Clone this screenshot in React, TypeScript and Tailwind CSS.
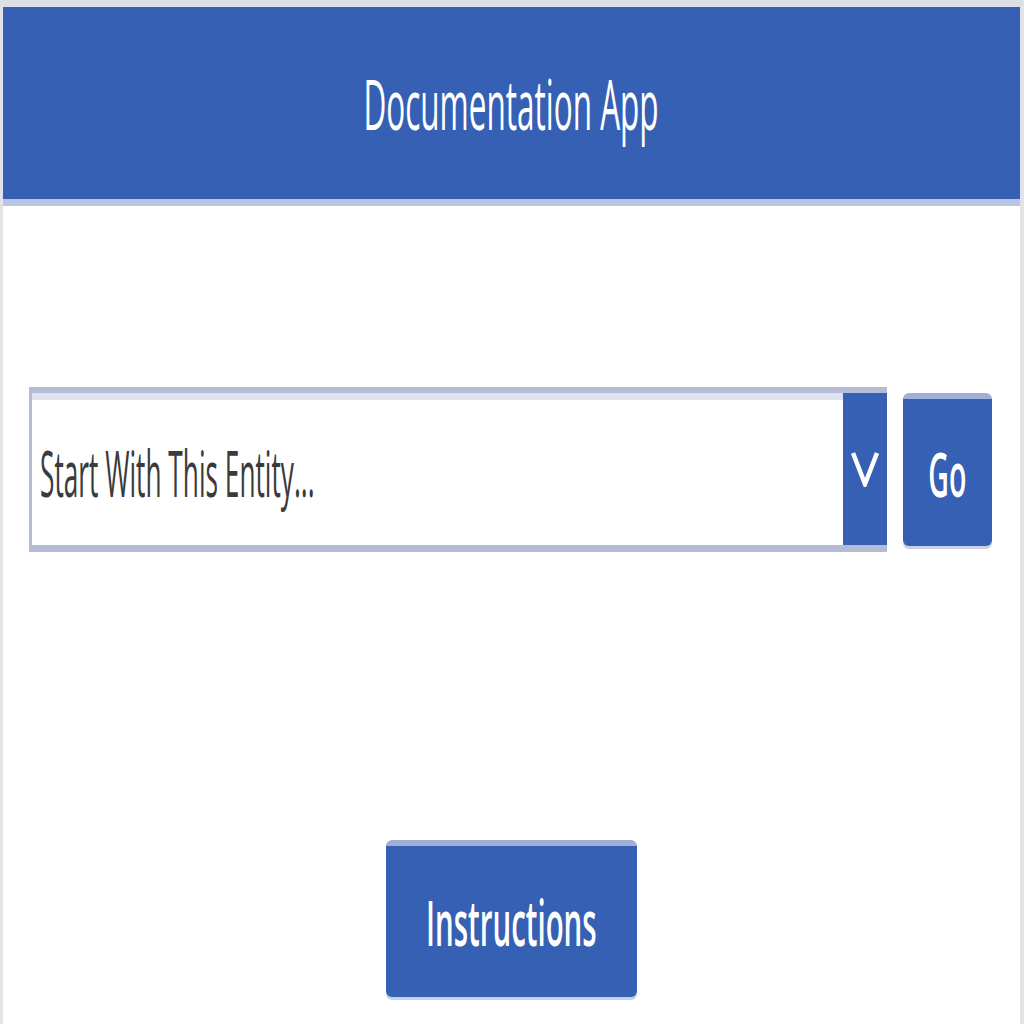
import React from 'react';

// condensed text look: the source is a squeezed canvas app screenshot
const font = { fontFamily: '"Open Sans", "Noto Sans", sans-serif' };

const BlueButton = ({ label, className }: { label: string; className: string }) => (
  <button
    className={`flex items-center justify-center rounded-md bg-[#3560b4] border-t-[6px] border-[#9fb0d8] shadow-[0_3px_0_#c9d1e6] ${className}`}
  >
    <span className="inline-block scale-x-[0.46] text-white font-semibold leading-none whitespace-nowrap" style={font}>
      {label}
    </span>
  </button>
);

export default function App() {
  return (
    <div className="h-screen w-full bg-white border-l-[3px] border-r-[4px] border-[#e1e3e8] flex flex-col" style={font}>
      {/* top strip */}
      <div className="h-[7px] bg-[#dcdfe4] -mx-[3px]" />

      {/* header */}
      <header className="h-[199px] bg-[#3560b4] border-b-[7px] border-[#b9c5e2] flex items-center justify-center">
        <h1 className="text-[70px] text-white font-medium leading-none scale-x-[0.45] whitespace-nowrap">
          Documentation App
        </h1>
      </header>

      {/* entity picker */}
      <div className="flex items-stretch mt-[181px] pl-[26px] pr-[28px] h-[165px] gap-4">
        <div className="flex-1 flex border-t-[6px] border-b-[7px] border-l-[3px] border-[#b3bbd6] bg-white">
          <div className="flex-1 flex items-center border-t-[7px] border-[#dfe3f0] pl-2 overflow-hidden">
            <span className="inline-block origin-left scale-x-[0.41] text-[64px] text-[#3b3b3b] whitespace-nowrap leading-none">
              Start With This Entity...
            </span>
          </div>
          <div className="w-[44px] bg-[#3560b4] flex items-center justify-center">
            <svg width="30" height="36" viewBox="0 0 30 36" fill="none">
              <path d="M3 2 L15 33 L27 2" stroke="white" strokeWidth="4.5" />
            </svg>
          </div>
        </div>
        <BlueButton label="Go" className="w-[89px] text-[62px] my-[6px]" />
      </div>

      {/* instructions */}
      <div className="flex justify-center mt-[288px]">
        <BlueButton label="Instructions" className="w-[251px] h-[157px] text-[64px]" />
      </div>
    </div>
  );
}
